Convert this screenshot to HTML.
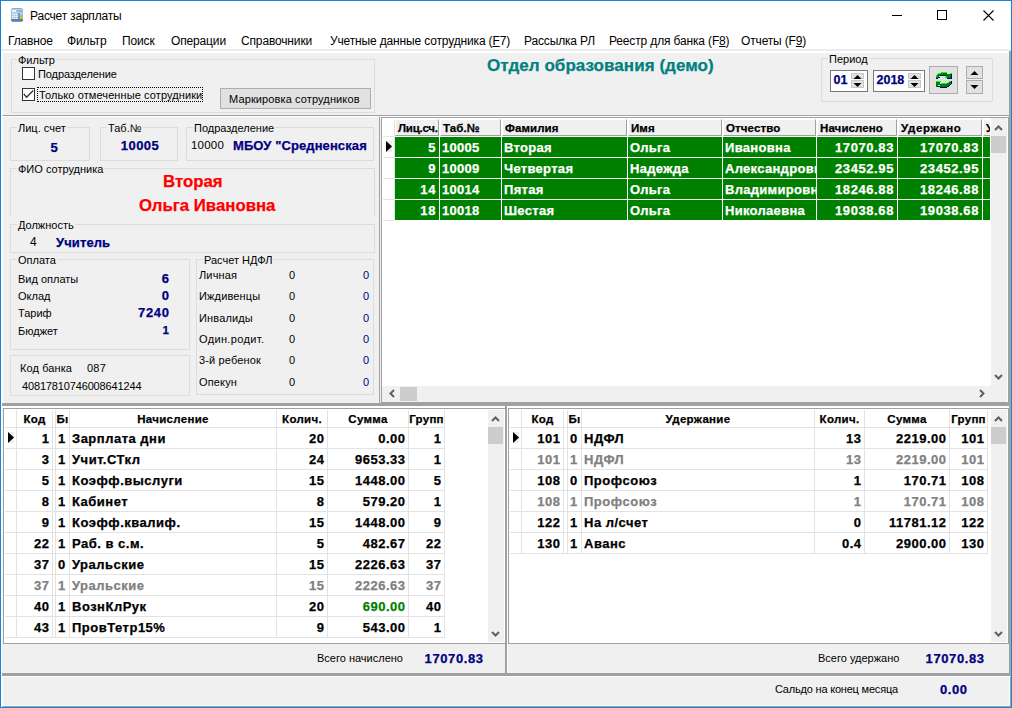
<!DOCTYPE html>
<html><head><meta charset="utf-8"><style>
html,body{margin:0;padding:0;}
body{width:1012px;height:708px;position:relative;overflow:hidden;background:#f0f0f0;font-family:"Liberation Sans",sans-serif;}
.a{position:absolute;box-sizing:content-box;}
.t{white-space:nowrap;}
u{text-decoration:underline;text-underline-offset:1px;}
.t[style*="font-weight:700"]{-webkit-text-stroke:0.25px currentColor;}
</style></head><body>
<div class="a" style="left:0px;top:0px;width:1012px;height:708px;background:#1883d7;"></div>
<div class="a" style="left:1px;top:1px;width:1010px;height:706px;background:#fff;"></div>
<svg class="a" style="left:11px;top:8px" width="13" height="14" viewBox="0 0 13 14" shape-rendering="crispEdges">
<rect x="0" y="1" width="12" height="12" fill="#b3d1ea"/>
<rect x="1" y="0" width="10" height="1" fill="#8da8bf"/>
<rect x="0" y="1" width="1" height="11" fill="#9dbdd8"/><rect x="11" y="1" width="1" height="11" fill="#9dbdd8"/>
<rect x="1" y="2" width="4" height="2" fill="#e6f2fb"/>
<rect x="6" y="2" width="5" height="2" fill="#8fb3dc"/>
<rect x="1" y="6" width="1" height="1" fill="#fff"/><rect x="3" y="6" width="1" height="1" fill="#fff"/><rect x="5" y="6" width="1" height="1" fill="#fff"/>
<rect x="1" y="8" width="1" height="1" fill="#fff"/><rect x="3" y="8" width="1" height="1" fill="#fff"/><rect x="5" y="8" width="1" height="1" fill="#fff"/>
<rect x="1" y="10" width="1" height="1" fill="#f4f4f4"/><rect x="3" y="10" width="1" height="1" fill="#f4f4f4"/><rect x="5" y="10" width="1" height="1" fill="#f4f4f4"/>
<rect x="7" y="5" width="2" height="6" fill="#6a9cd6"/>
<rect x="9" y="7" width="2" height="4" fill="#f2b20c"/>
<rect x="0" y="11" width="12" height="2" fill="#5d84a8"/>
<rect x="1" y="13" width="10" height="1" fill="#7f98ae"/>
</svg>
<div class="a t" style="top:7.84px;font-size:12px;line-height:16px;font-weight:400;color:#000;letter-spacing:-0.2px;left:30px;">Расчет зарплаты</div>
<div class="a" style="left:892px;top:15px;width:10px;height:1px;background:#000;"></div>
<div class="a" style="left:937px;top:10px;width:8px;height:8px;border:1px solid #000;"></div>
<svg class="a" style="left:983px;top:10px" width="11" height="11" viewBox="0 0 11 11"><path d="M0.5 0.5L10.5 10.5M10.5 0.5L0.5 10.5" stroke="#000" stroke-width="1.1"/></svg>
<div class="a t" style="top:32.84px;font-size:12px;line-height:16px;font-weight:400;color:#000;letter-spacing:-0.15px;left:8px;">Главное</div>
<div class="a t" style="top:32.84px;font-size:12px;line-height:16px;font-weight:400;color:#000;letter-spacing:-0.15px;left:67px;">Фильтр</div>
<div class="a t" style="top:32.84px;font-size:12px;line-height:16px;font-weight:400;color:#000;letter-spacing:-0.15px;left:122px;">Поиск</div>
<div class="a t" style="top:32.84px;font-size:12px;line-height:16px;font-weight:400;color:#000;letter-spacing:-0.15px;left:171px;">Операции</div>
<div class="a t" style="top:32.84px;font-size:12px;line-height:16px;font-weight:400;color:#000;letter-spacing:-0.15px;left:241px;">Справочники</div>
<div class="a t" style="top:32.84px;font-size:12px;line-height:16px;font-weight:400;color:#000;letter-spacing:-0.15px;left:330px;">Учетные данные сотрудника (<u>F</u>7)</div>
<div class="a t" style="top:32.84px;font-size:12px;line-height:16px;font-weight:400;color:#000;letter-spacing:-0.15px;left:524px;">Рассылка РЛ</div>
<div class="a t" style="top:32.84px;font-size:12px;line-height:16px;font-weight:400;color:#000;letter-spacing:-0.15px;left:609px;">Реестр для банка (F<u>8</u>)</div>
<div class="a t" style="top:32.84px;font-size:12px;line-height:16px;font-weight:400;color:#000;letter-spacing:-0.15px;left:741px;">Отчеты (F<u>9</u>)</div>
<div class="a" style="left:1px;top:49px;width:1010px;height:2px;background:#ececec;"></div>
<div class="a" style="left:1px;top:51px;width:1010px;height:656px;background:#f0f0f0;"></div>
<div class="a" style="left:1px;top:51px;width:1010px;height:1px;background:#fff;"></div>
<div class="a" style="left:2px;top:52px;width:1006px;height:62px;border-style:solid;border-width:1px;border-color:#fff #a0a0a0 #a0a0a0 #fff;"></div>
<div class="a" style="left:11px;top:59px;width:362px;height:52px;border:1px solid #dcdcdc;"></div>
<div class="a t" style="top:53.19px;font-size:11px;line-height:14px;font-weight:400;color:#000;left:17px;background:linear-gradient(transparent 28%, #f0f0f0 28%, #f0f0f0 62%, transparent 62%);padding:0 1px;">Фильтр</div>
<div class="a" style="left:22px;top:67px;width:11px;height:11px;border:1px solid #333;background:#fff;"></div>
<div class="a t" style="top:67.19px;font-size:11px;line-height:14px;font-weight:400;color:#000;letter-spacing:-0.1px;left:38px;">Подразделение</div>
<div class="a" style="left:22px;top:88px;width:11px;height:11px;border:1px solid #333;background:#fff;"></div>
<svg class="a" style="left:23px;top:89px" width="11" height="11" viewBox="0 0 11 11"><path d="M0.8 5L3.6 8.2L10.2 1.5" stroke="#333" stroke-width="1.3" fill="none"/></svg>
<div class="a" style="left:37px;top:87px;width:164px;height:13px;border:1px solid #000;border-style:dotted;"></div>
<div class="a t" style="top:87.69px;font-size:11px;line-height:14px;font-weight:400;color:#000;letter-spacing:0.1px;left:39px;">Только отмеченные сотрудники</div>
<div class="a" style="left:220px;top:88px;width:149px;height:19px;border:1px solid #adadad;background:#e1e1e1;"></div>
<div class="a t" style="top:92.19px;font-size:11px;line-height:14px;font-weight:400;color:#000;letter-spacing:0.12px;left:229px;">Маркировка сотрудников</div>
<div class="a t" style="top:54.51px;font-size:17px;line-height:22px;font-weight:700;color:#008080;letter-spacing:0.05px;left:487px;">Отдел образования (демо)</div>
<div class="a" style="left:821px;top:58px;width:170px;height:42px;border:1px solid #dcdcdc;"></div>
<div class="a t" style="top:52.19px;font-size:11px;line-height:14px;font-weight:400;color:#000;left:828px;background:linear-gradient(transparent 28%, #f0f0f0 28%, #f0f0f0 62%, transparent 62%);padding:0 1px;">Период</div>
<div class="a" style="left:830px;top:70px;width:36px;height:20px;border:1px solid #7a7a7a;background:#fff;"></div>
<div class="a t" style="top:71.87px;font-size:12.5px;line-height:16px;font-weight:700;color:#000080;left:833.5px;">01</div>
<div class="a" style="left:851px;top:73px;width:11px;height:4px;border:1px solid #c8c8c8;background:#e1e1e1;"></div>
<div class="a" style="left:851px;top:80px;width:11px;height:6px;border:1px solid #c8c8c8;background:#e1e1e1;"></div>
<svg class="a" style="left:851px;top:73px" width="13" height="16" viewBox="0 0 13 16"><path d="M2.5 6L6.5 2L10.5 6Z M2.5 10L10.5 10L6.5 14Z" fill="#000"/></svg>
<div class="a" style="left:873px;top:70px;width:50px;height:20px;border:1px solid #7a7a7a;background:#fff;"></div>
<div class="a t" style="top:71.87px;font-size:12.5px;line-height:16px;font-weight:700;color:#000080;left:876.5px;">2018</div>
<div class="a" style="left:908px;top:73px;width:11px;height:4px;border:1px solid #c8c8c8;background:#e1e1e1;"></div>
<div class="a" style="left:908px;top:80px;width:11px;height:6px;border:1px solid #c8c8c8;background:#e1e1e1;"></div>
<svg class="a" style="left:908px;top:73px" width="13" height="16" viewBox="0 0 13 16"><path d="M2.5 6L6.5 2L10.5 6Z M2.5 10L10.5 10L6.5 14Z" fill="#000"/></svg>
<div class="a" style="left:929px;top:66px;width:27px;height:26px;border:1px solid #adadad;background:#e1e1e1;"></div>
<svg class="a" style="left:936px;top:71px" width="17" height="17" viewBox="0 0 17 17" shape-rendering="crispEdges"><rect x="5" y="1" width="6" height="1" fill="#008000"/><rect x="2" y="2" width="9" height="1" fill="#008000"/><rect x="1" y="3" width="10" height="1" fill="#008000"/><rect x="0" y="4" width="4" height="1" fill="#008000"/><rect x="0" y="5" width="3" height="1" fill="#008000"/><rect x="0" y="6" width="2" height="1" fill="#008000"/><rect x="15" y="2" width="1" height="1" fill="#008000"/><rect x="11" y="3" width="4" height="1" fill="#008000"/><rect x="10" y="4" width="5" height="1" fill="#008000"/><rect x="10" y="5" width="5" height="1" fill="#008000"/><rect x="9" y="6" width="6" height="1" fill="#008000"/><rect x="5" y="1" width="6" height="1" fill="#00ff00"/><rect x="2" y="2" width="3" height="1" fill="#00ff00"/><rect x="1" y="3" width="1" height="1" fill="#00ff00"/><rect x="0" y="4" width="1" height="1" fill="#00ff00"/><rect x="0" y="5" width="1" height="1" fill="#00ff00"/><rect x="14" y="2" width="2" height="1" fill="#00ff00"/><rect x="9" y="6" width="2" height="1" fill="#00ff00"/><rect x="4" y="4" width="6" height="1" fill="#000080"/><rect x="3" y="6" width="1" height="1" fill="#000080"/><rect x="2" y="6" width="1" height="1" fill="#000080"/><rect x="0" y="7" width="2" height="1" fill="#000080"/><rect x="11" y="7" width="5" height="1" fill="#000080"/><rect x="15" y="3" width="1" height="1" fill="#000080"/><rect x="15" y="4" width="1" height="1" fill="#000080"/><rect x="15" y="5" width="1" height="1" fill="#000080"/><rect x="15" y="6" width="1" height="1" fill="#000080"/><rect x="0" y="10" width="5" height="1" fill="#008000"/><rect x="0" y="11" width="4" height="1" fill="#008000"/><rect x="0" y="12" width="4" height="1" fill="#008000"/><rect x="0" y="13" width="5" height="1" fill="#008000"/><rect x="0" y="14" width="2" height="1" fill="#008000"/><rect x="0" y="15" width="1" height="1" fill="#008000"/><rect x="13" y="10" width="2" height="1" fill="#008000"/><rect x="12" y="11" width="3" height="1" fill="#008000"/><rect x="5" y="12" width="10" height="1" fill="#008000"/><rect x="4" y="13" width="10" height="1" fill="#008000"/><rect x="4" y="14" width="9" height="1" fill="#008000"/><rect x="4" y="15" width="7" height="1" fill="#008000"/><rect x="0" y="10" width="5" height="1" fill="#00ff00"/><rect x="5" y="12" width="6" height="1" fill="#00ff00"/><rect x="12" y="11" width="1" height="1" fill="#00ff00"/><rect x="13" y="10" width="2" height="1" fill="#00ff00"/><rect x="15" y="10" width="1" height="1" fill="#000080"/><rect x="15" y="11" width="1" height="1" fill="#000080"/><rect x="15" y="12" width="1" height="1" fill="#000080"/><rect x="14" y="13" width="1" height="1" fill="#000080"/><rect x="13" y="14" width="1" height="1" fill="#000080"/><rect x="11" y="15" width="2" height="1" fill="#000080"/><rect x="4" y="16" width="7" height="1" fill="#000080"/><rect x="2" y="15" width="2" height="1" fill="#000080"/><rect x="1" y="15" width="1" height="1" fill="#000080"/></svg>
<div class="a" style="left:966px;top:66px;width:15px;height:11px;border:1px solid #adadad;background:#e1e1e1;"></div>
<div class="a" style="left:966px;top:80px;width:15px;height:12px;border:1px solid #adadad;background:#e1e1e1;"></div>
<svg class="a" style="left:966px;top:66px" width="17" height="28" viewBox="0 0 17 28"><path d="M4.5 9L8.5 5L12.5 9Z M4.5 19L12.5 19L8.5 23Z" fill="#000"/></svg>
<div class="a" style="left:2px;top:116px;width:376px;height:286px;border-style:solid;border-width:1px;border-color:#fff #a0a0a0 #a0a0a0 #fff;"></div>
<div class="a" style="left:10px;top:127px;width:78px;height:32px;border:1px solid #dcdcdc;"></div>
<div class="a t" style="top:121.19px;font-size:11px;line-height:14px;font-weight:400;color:#000;left:17px;background:linear-gradient(transparent 28%, #f0f0f0 28%, #f0f0f0 62%, transparent 62%);padding:0 1px;">Лиц. счет</div>
<div class="a t" style="top:138.60px;font-size:13px;line-height:17px;font-weight:700;color:#000080;left:-246px;width:600px;text-align:center;">5</div>
<div class="a" style="left:100px;top:127px;width:76px;height:32px;border:1px solid #dcdcdc;"></div>
<div class="a t" style="top:121.19px;font-size:11px;line-height:14px;font-weight:400;color:#000;left:107px;background:linear-gradient(transparent 28%, #f0f0f0 28%, #f0f0f0 62%, transparent 62%);padding:0 1px;">Таб.№</div>
<div class="a t" style="top:137.00px;font-size:13px;line-height:17px;font-weight:700;color:#000080;letter-spacing:0.5px;left:-160px;width:600px;text-align:center;">10005</div>
<div class="a" style="left:186px;top:127px;width:186px;height:32px;border:1px solid #dcdcdc;"></div>
<div class="a t" style="top:121.19px;font-size:11px;line-height:14px;font-weight:400;color:#000;left:193px;background:linear-gradient(transparent 28%, #f0f0f0 28%, #f0f0f0 62%, transparent 62%);padding:0 1px;">Подразделение</div>
<div class="a t" style="top:138.22px;font-size:11.5px;line-height:15px;font-weight:400;color:#000;letter-spacing:0.2px;left:191px;">10000</div>
<div class="a t" style="top:136.70px;font-size:13px;line-height:17px;font-weight:700;color:#000080;letter-spacing:0.1px;left:233px;">МБОУ "Средненская</div>
<div class="a" style="left:10px;top:168px;width:363px;height:48px;border:1px solid #dcdcdc;"></div>
<div class="a t" style="top:162.19px;font-size:11px;line-height:14px;font-weight:400;color:#000;left:17px;background:linear-gradient(transparent 28%, #f0f0f0 28%, #f0f0f0 62%, transparent 62%);padding:0 1px;">ФИО сотрудника</div>
<div class="a" style="left:10px;top:216px;width:365px;height:3px;background:#f0f0f0;"></div>
<div class="a t" style="top:171.08px;font-size:16.8px;line-height:22px;font-weight:700;color:#ff0000;left:163px;">Вторая</div>
<div class="a t" style="top:195.38px;font-size:16.8px;line-height:22px;font-weight:700;color:#ff0000;left:139px;">Ольга Ивановна</div>
<div class="a" style="left:10px;top:224px;width:363px;height:27px;border:1px solid #dcdcdc;"></div>
<div class="a t" style="top:218.19px;font-size:11px;line-height:14px;font-weight:400;color:#000;left:17px;background:linear-gradient(transparent 28%, #f0f0f0 28%, #f0f0f0 62%, transparent 62%);padding:0 1px;">Должность</div>
<div class="a t" style="top:234.34px;font-size:12px;line-height:16px;font-weight:400;color:#000;left:30px;">4</div>
<div class="a t" style="top:233.50px;font-size:13px;line-height:17px;font-weight:700;color:#000080;letter-spacing:0.1px;left:56px;">Учитель</div>
<div class="a" style="left:10px;top:259px;width:178px;height:89px;border:1px solid #dcdcdc;"></div>
<div class="a t" style="top:253.19px;font-size:11px;line-height:14px;font-weight:400;color:#000;left:17px;background:linear-gradient(transparent 28%, #f0f0f0 28%, #f0f0f0 62%, transparent 62%);padding:0 1px;">Оплата</div>
<div class="a t" style="top:272.19px;font-size:11px;line-height:14px;font-weight:400;color:#000;left:18px;">Вид оплаты</div>
<div class="a t" style="top:270.00px;font-size:13px;line-height:17px;font-weight:700;color:#000080;letter-spacing:0.7px;left:-231px;width:400.7px;text-align:right;">6</div>
<div class="a t" style="top:289.19px;font-size:11px;line-height:14px;font-weight:400;color:#000;left:18px;">Оклад</div>
<div class="a t" style="top:287.00px;font-size:13px;line-height:17px;font-weight:700;color:#000080;letter-spacing:0.7px;left:-231px;width:400.7px;text-align:right;">0</div>
<div class="a t" style="top:306.19px;font-size:11px;line-height:14px;font-weight:400;color:#000;left:18px;">Тариф</div>
<div class="a t" style="top:304.00px;font-size:13px;line-height:17px;font-weight:700;color:#000080;letter-spacing:0.7px;left:-231px;width:400.7px;text-align:right;">7240</div>
<div class="a t" style="top:323.59px;font-size:11px;line-height:14px;font-weight:400;color:#000;left:18px;">Бюджет</div>
<div class="a t" style="top:322.92px;font-size:11.5px;line-height:15px;font-weight:700;color:#000080;letter-spacing:0.7px;left:-231px;width:400.7px;text-align:right;">1</div>
<div class="a" style="left:10px;top:355px;width:178px;height:39px;border:1px solid #dcdcdc;"></div>
<div class="a t" style="top:361.19px;font-size:11px;line-height:14px;font-weight:400;color:#000;letter-spacing:0.1px;left:20px;">Код банка</div>
<div class="a t" style="top:361.19px;font-size:11px;line-height:14px;font-weight:400;color:#000;letter-spacing:0.2px;left:87px;">087</div>
<div class="a t" style="top:379.49px;font-size:11px;line-height:14px;font-weight:400;color:#000;letter-spacing:-0.15px;left:22px;">40817810746008641244</div>
<div class="a" style="left:196px;top:259px;width:176px;height:134px;border:1px solid #dcdcdc;"></div>
<div class="a t" style="top:253.19px;font-size:11px;line-height:14px;font-weight:400;color:#000;left:203px;background:linear-gradient(transparent 28%, #f0f0f0 28%, #f0f0f0 62%, transparent 62%);padding:0 1px;">Расчет НДФЛ</div>
<div class="a t" style="top:267.89px;font-size:11px;line-height:14px;font-weight:400;color:#000;letter-spacing:0.15px;left:199px;">Личная</div>
<div class="a t" style="top:267.89px;font-size:11px;line-height:14px;font-weight:400;color:#000;left:289px;">0</div>
<div class="a t" style="top:267.89px;font-size:11px;line-height:14px;font-weight:400;color:#000080;left:-31px;width:400px;text-align:right;">0</div>
<div class="a t" style="top:289.29px;font-size:11px;line-height:14px;font-weight:400;color:#000;letter-spacing:0.15px;left:199px;">Иждивенцы</div>
<div class="a t" style="top:289.29px;font-size:11px;line-height:14px;font-weight:400;color:#000;left:289px;">0</div>
<div class="a t" style="top:289.29px;font-size:11px;line-height:14px;font-weight:400;color:#000080;left:-31px;width:400px;text-align:right;">0</div>
<div class="a t" style="top:310.69px;font-size:11px;line-height:14px;font-weight:400;color:#000;letter-spacing:0.15px;left:199px;">Инвалиды</div>
<div class="a t" style="top:310.69px;font-size:11px;line-height:14px;font-weight:400;color:#000;left:289px;">0</div>
<div class="a t" style="top:310.69px;font-size:11px;line-height:14px;font-weight:400;color:#000080;left:-31px;width:400px;text-align:right;">0</div>
<div class="a t" style="top:332.09px;font-size:11px;line-height:14px;font-weight:400;color:#000;letter-spacing:0.35px;left:199px;">Один.родит.</div>
<div class="a t" style="top:332.09px;font-size:11px;line-height:14px;font-weight:400;color:#000;left:289px;">0</div>
<div class="a t" style="top:332.09px;font-size:11px;line-height:14px;font-weight:400;color:#000080;left:-31px;width:400px;text-align:right;">0</div>
<div class="a t" style="top:353.49px;font-size:11px;line-height:14px;font-weight:400;color:#000;letter-spacing:0.15px;left:199px;">3-й ребенок</div>
<div class="a t" style="top:353.49px;font-size:11px;line-height:14px;font-weight:400;color:#000;left:289px;">0</div>
<div class="a t" style="top:353.49px;font-size:11px;line-height:14px;font-weight:400;color:#000080;left:-31px;width:400px;text-align:right;">0</div>
<div class="a t" style="top:374.89px;font-size:11px;line-height:14px;font-weight:400;color:#000;letter-spacing:0.15px;left:199px;">Опекун</div>
<div class="a t" style="top:374.89px;font-size:11px;line-height:14px;font-weight:400;color:#000;left:289px;">0</div>
<div class="a t" style="top:374.89px;font-size:11px;line-height:14px;font-weight:400;color:#000080;left:-31px;width:400px;text-align:right;">0</div>
<div class="a" style="left:380px;top:116px;width:1px;height:287px;background:#f0f0f0;"></div>
<div class="a" style="left:380px;top:116px;width:630px;height:1px;background:#fff;"></div>
<div class="a" style="left:381px;top:117px;width:626px;height:284px;border:1px solid #a0a0a0;background:#fff;"></div>
<div class="a" style="left:383px;top:136px;width:11px;height:1px;background:#e3e3e3;"></div>
<div class="a" style="left:383px;top:157px;width:11px;height:1px;background:#e3e3e3;"></div>
<div class="a" style="left:383px;top:178px;width:11px;height:1px;background:#e3e3e3;"></div>
<div class="a" style="left:383px;top:199px;width:11px;height:1px;background:#e3e3e3;"></div>
<div class="a" style="left:383px;top:220px;width:11px;height:1px;background:#e3e3e3;"></div>
<div class="a" style="left:394px;top:119px;width:1px;height:101px;background:#e3e3e3;"></div>
<div class="a" style="left:395px;top:119px;width:43px;height:16px;background:#f0f0f0;border-style:solid;border-width:1px 1px 1px 1px;border-color:#fff #a0a0a0 #a0a0a0 #fff;box-sizing:border-box;width:44px;height:17px"></div>
<div class="a" style="left:395px;top:119px;width:44px;height:17px;overflow:hidden"><div class="t" style="position:absolute;left:3px;top:2.32px;font-size:11.5px;line-height:14px;font-weight:700;letter-spacing:-0.25px;white-space:nowrap">Лиц.сч.</div></div>
<div class="a" style="left:440px;top:119px;width:60px;height:16px;background:#f0f0f0;border-style:solid;border-width:1px 1px 1px 1px;border-color:#fff #a0a0a0 #a0a0a0 #fff;box-sizing:border-box;width:61px;height:17px"></div>
<div class="a" style="left:440px;top:119px;width:61px;height:17px;overflow:hidden"><div class="t" style="position:absolute;left:3px;top:2.32px;font-size:11.5px;line-height:14px;font-weight:700;letter-spacing:0.1px;white-space:nowrap">Таб.№</div></div>
<div class="a" style="left:502px;top:119px;width:124px;height:16px;background:#f0f0f0;border-style:solid;border-width:1px 1px 1px 1px;border-color:#fff #a0a0a0 #a0a0a0 #fff;box-sizing:border-box;width:125px;height:17px"></div>
<div class="a" style="left:502px;top:119px;width:125px;height:17px;overflow:hidden"><div class="t" style="position:absolute;left:3px;top:2.32px;font-size:11.5px;line-height:14px;font-weight:700;letter-spacing:0.1px;white-space:nowrap">Фамилия</div></div>
<div class="a" style="left:628px;top:119px;width:93px;height:16px;background:#f0f0f0;border-style:solid;border-width:1px 1px 1px 1px;border-color:#fff #a0a0a0 #a0a0a0 #fff;box-sizing:border-box;width:94px;height:17px"></div>
<div class="a" style="left:628px;top:119px;width:94px;height:17px;overflow:hidden"><div class="t" style="position:absolute;left:3px;top:2.32px;font-size:11.5px;line-height:14px;font-weight:700;letter-spacing:0.1px;white-space:nowrap">Имя</div></div>
<div class="a" style="left:723px;top:119px;width:92px;height:16px;background:#f0f0f0;border-style:solid;border-width:1px 1px 1px 1px;border-color:#fff #a0a0a0 #a0a0a0 #fff;box-sizing:border-box;width:93px;height:17px"></div>
<div class="a" style="left:723px;top:119px;width:93px;height:17px;overflow:hidden"><div class="t" style="position:absolute;left:3px;top:2.32px;font-size:11.5px;line-height:14px;font-weight:700;letter-spacing:0.1px;white-space:nowrap">Отчество</div></div>
<div class="a" style="left:817px;top:119px;width:79px;height:16px;background:#f0f0f0;border-style:solid;border-width:1px 1px 1px 1px;border-color:#fff #a0a0a0 #a0a0a0 #fff;box-sizing:border-box;width:80px;height:17px"></div>
<div class="a" style="left:817px;top:119px;width:80px;height:17px;overflow:hidden"><div class="t" style="position:absolute;left:3px;top:2.32px;font-size:11.5px;line-height:14px;font-weight:700;letter-spacing:0.1px;white-space:nowrap">Начислено</div></div>
<div class="a" style="left:898px;top:119px;width:83px;height:16px;background:#f0f0f0;border-style:solid;border-width:1px 1px 1px 1px;border-color:#fff #a0a0a0 #a0a0a0 #fff;box-sizing:border-box;width:84px;height:17px"></div>
<div class="a" style="left:898px;top:119px;width:84px;height:17px;overflow:hidden"><div class="t" style="position:absolute;left:3px;top:2.32px;font-size:11.5px;line-height:14px;font-weight:700;letter-spacing:0.6px;white-space:nowrap">Удержано</div></div>
<div class="a" style="left:983px;top:119px;width:6px;height:16px;background:#f0f0f0;border-style:solid;border-width:1px 0px 1px 1px;border-color:#fff #a0a0a0 #a0a0a0 #fff;box-sizing:border-box;width:7px;height:17px"></div>
<div class="a" style="left:983px;top:119px;width:7px;height:17px;overflow:hidden"><div class="t" style="position:absolute;left:3px;top:2.32px;font-size:11.5px;line-height:14px;font-weight:700;letter-spacing:0.1px;white-space:nowrap">У</div></div>
<div class="a" style="left:395px;top:137px;width:595px;height:20px;background:#008000;"></div>
<div class="a" style="left:439px;top:137px;width:1px;height:20px;background:#fff;"></div>
<div class="a" style="left:501px;top:137px;width:1px;height:20px;background:#fff;"></div>
<div class="a" style="left:627px;top:137px;width:1px;height:20px;background:#fff;"></div>
<div class="a" style="left:722px;top:137px;width:1px;height:20px;background:#fff;"></div>
<div class="a" style="left:816px;top:137px;width:1px;height:20px;background:#fff;"></div>
<div class="a" style="left:897px;top:137px;width:1px;height:20px;background:#fff;"></div>
<div class="a" style="left:982px;top:137px;width:1px;height:20px;background:#fff;"></div>
<div class="a" style="left:395px;top:157px;width:595px;height:1px;background:#fff;"></div>
<div class="a" style="left:395px;top:137px;width:44px;height:20px;overflow:hidden"><div class="t" style="position:absolute;right:3px;top:1.50px;font-size:13px;line-height:17px;font-weight:700;color:#fff;letter-spacing:0.6px;white-space:nowrap">5</div></div>
<div class="a" style="left:440px;top:137px;width:61px;height:20px;overflow:hidden"><div class="t" style="position:absolute;left:2px;top:1.50px;font-size:13px;line-height:17px;font-weight:700;color:#fff;letter-spacing:0.3px;white-space:nowrap">10005</div></div>
<div class="a" style="left:502px;top:137px;width:125px;height:20px;overflow:hidden"><div class="t" style="position:absolute;left:2px;top:1.50px;font-size:13px;line-height:17px;font-weight:700;color:#fff;letter-spacing:0.3px;white-space:nowrap">Вторая</div></div>
<div class="a" style="left:628px;top:137px;width:94px;height:20px;overflow:hidden"><div class="t" style="position:absolute;left:2px;top:1.50px;font-size:13px;line-height:17px;font-weight:700;color:#fff;letter-spacing:0.3px;white-space:nowrap">Ольга</div></div>
<div class="a" style="left:723px;top:137px;width:93px;height:20px;overflow:hidden"><div class="t" style="position:absolute;left:2px;top:1.50px;font-size:13px;line-height:17px;font-weight:700;color:#fff;letter-spacing:0.3px;white-space:nowrap">Ивановна</div></div>
<div class="a" style="left:817px;top:137px;width:80px;height:20px;overflow:hidden"><div class="t" style="position:absolute;right:3px;top:1.50px;font-size:13px;line-height:17px;font-weight:700;color:#fff;letter-spacing:0.6px;white-space:nowrap">17070.83</div></div>
<div class="a" style="left:898px;top:137px;width:84px;height:20px;overflow:hidden"><div class="t" style="position:absolute;right:3px;top:1.50px;font-size:13px;line-height:17px;font-weight:700;color:#fff;letter-spacing:0.6px;white-space:nowrap">17070.83</div></div>
<div class="a" style="left:395px;top:158px;width:595px;height:20px;background:#008000;"></div>
<div class="a" style="left:439px;top:158px;width:1px;height:20px;background:#fff;"></div>
<div class="a" style="left:501px;top:158px;width:1px;height:20px;background:#fff;"></div>
<div class="a" style="left:627px;top:158px;width:1px;height:20px;background:#fff;"></div>
<div class="a" style="left:722px;top:158px;width:1px;height:20px;background:#fff;"></div>
<div class="a" style="left:816px;top:158px;width:1px;height:20px;background:#fff;"></div>
<div class="a" style="left:897px;top:158px;width:1px;height:20px;background:#fff;"></div>
<div class="a" style="left:982px;top:158px;width:1px;height:20px;background:#fff;"></div>
<div class="a" style="left:395px;top:178px;width:595px;height:1px;background:#fff;"></div>
<div class="a" style="left:395px;top:158px;width:44px;height:20px;overflow:hidden"><div class="t" style="position:absolute;right:3px;top:1.50px;font-size:13px;line-height:17px;font-weight:700;color:#fff;letter-spacing:0.6px;white-space:nowrap">9</div></div>
<div class="a" style="left:440px;top:158px;width:61px;height:20px;overflow:hidden"><div class="t" style="position:absolute;left:2px;top:1.50px;font-size:13px;line-height:17px;font-weight:700;color:#fff;letter-spacing:0.3px;white-space:nowrap">10009</div></div>
<div class="a" style="left:502px;top:158px;width:125px;height:20px;overflow:hidden"><div class="t" style="position:absolute;left:2px;top:1.50px;font-size:13px;line-height:17px;font-weight:700;color:#fff;letter-spacing:0.3px;white-space:nowrap">Четвертая</div></div>
<div class="a" style="left:628px;top:158px;width:94px;height:20px;overflow:hidden"><div class="t" style="position:absolute;left:2px;top:1.50px;font-size:13px;line-height:17px;font-weight:700;color:#fff;letter-spacing:0.3px;white-space:nowrap">Надежда</div></div>
<div class="a" style="left:723px;top:158px;width:93px;height:20px;overflow:hidden"><div class="t" style="position:absolute;left:2px;top:1.50px;font-size:13px;line-height:17px;font-weight:700;color:#fff;letter-spacing:0.3px;white-space:nowrap">Александровна</div></div>
<div class="a" style="left:817px;top:158px;width:80px;height:20px;overflow:hidden"><div class="t" style="position:absolute;right:3px;top:1.50px;font-size:13px;line-height:17px;font-weight:700;color:#fff;letter-spacing:0.6px;white-space:nowrap">23452.95</div></div>
<div class="a" style="left:898px;top:158px;width:84px;height:20px;overflow:hidden"><div class="t" style="position:absolute;right:3px;top:1.50px;font-size:13px;line-height:17px;font-weight:700;color:#fff;letter-spacing:0.6px;white-space:nowrap">23452.95</div></div>
<div class="a" style="left:395px;top:179px;width:595px;height:20px;background:#008000;"></div>
<div class="a" style="left:439px;top:179px;width:1px;height:20px;background:#fff;"></div>
<div class="a" style="left:501px;top:179px;width:1px;height:20px;background:#fff;"></div>
<div class="a" style="left:627px;top:179px;width:1px;height:20px;background:#fff;"></div>
<div class="a" style="left:722px;top:179px;width:1px;height:20px;background:#fff;"></div>
<div class="a" style="left:816px;top:179px;width:1px;height:20px;background:#fff;"></div>
<div class="a" style="left:897px;top:179px;width:1px;height:20px;background:#fff;"></div>
<div class="a" style="left:982px;top:179px;width:1px;height:20px;background:#fff;"></div>
<div class="a" style="left:395px;top:199px;width:595px;height:1px;background:#fff;"></div>
<div class="a" style="left:395px;top:179px;width:44px;height:20px;overflow:hidden"><div class="t" style="position:absolute;right:3px;top:1.50px;font-size:13px;line-height:17px;font-weight:700;color:#fff;letter-spacing:0.6px;white-space:nowrap">14</div></div>
<div class="a" style="left:440px;top:179px;width:61px;height:20px;overflow:hidden"><div class="t" style="position:absolute;left:2px;top:1.50px;font-size:13px;line-height:17px;font-weight:700;color:#fff;letter-spacing:0.3px;white-space:nowrap">10014</div></div>
<div class="a" style="left:502px;top:179px;width:125px;height:20px;overflow:hidden"><div class="t" style="position:absolute;left:2px;top:1.50px;font-size:13px;line-height:17px;font-weight:700;color:#fff;letter-spacing:0.3px;white-space:nowrap">Пятая</div></div>
<div class="a" style="left:628px;top:179px;width:94px;height:20px;overflow:hidden"><div class="t" style="position:absolute;left:2px;top:1.50px;font-size:13px;line-height:17px;font-weight:700;color:#fff;letter-spacing:0.3px;white-space:nowrap">Ольга</div></div>
<div class="a" style="left:723px;top:179px;width:93px;height:20px;overflow:hidden"><div class="t" style="position:absolute;left:2px;top:1.50px;font-size:13px;line-height:17px;font-weight:700;color:#fff;letter-spacing:0.3px;white-space:nowrap">Владимировна</div></div>
<div class="a" style="left:817px;top:179px;width:80px;height:20px;overflow:hidden"><div class="t" style="position:absolute;right:3px;top:1.50px;font-size:13px;line-height:17px;font-weight:700;color:#fff;letter-spacing:0.6px;white-space:nowrap">18246.88</div></div>
<div class="a" style="left:898px;top:179px;width:84px;height:20px;overflow:hidden"><div class="t" style="position:absolute;right:3px;top:1.50px;font-size:13px;line-height:17px;font-weight:700;color:#fff;letter-spacing:0.6px;white-space:nowrap">18246.88</div></div>
<div class="a" style="left:395px;top:200px;width:595px;height:20px;background:#008000;"></div>
<div class="a" style="left:439px;top:200px;width:1px;height:20px;background:#fff;"></div>
<div class="a" style="left:501px;top:200px;width:1px;height:20px;background:#fff;"></div>
<div class="a" style="left:627px;top:200px;width:1px;height:20px;background:#fff;"></div>
<div class="a" style="left:722px;top:200px;width:1px;height:20px;background:#fff;"></div>
<div class="a" style="left:816px;top:200px;width:1px;height:20px;background:#fff;"></div>
<div class="a" style="left:897px;top:200px;width:1px;height:20px;background:#fff;"></div>
<div class="a" style="left:982px;top:200px;width:1px;height:20px;background:#fff;"></div>
<div class="a" style="left:395px;top:220px;width:595px;height:1px;background:#fff;"></div>
<div class="a" style="left:395px;top:200px;width:44px;height:20px;overflow:hidden"><div class="t" style="position:absolute;right:3px;top:1.50px;font-size:13px;line-height:17px;font-weight:700;color:#fff;letter-spacing:0.6px;white-space:nowrap">18</div></div>
<div class="a" style="left:440px;top:200px;width:61px;height:20px;overflow:hidden"><div class="t" style="position:absolute;left:2px;top:1.50px;font-size:13px;line-height:17px;font-weight:700;color:#fff;letter-spacing:0.3px;white-space:nowrap">10018</div></div>
<div class="a" style="left:502px;top:200px;width:125px;height:20px;overflow:hidden"><div class="t" style="position:absolute;left:2px;top:1.50px;font-size:13px;line-height:17px;font-weight:700;color:#fff;letter-spacing:0.3px;white-space:nowrap">Шестая</div></div>
<div class="a" style="left:628px;top:200px;width:94px;height:20px;overflow:hidden"><div class="t" style="position:absolute;left:2px;top:1.50px;font-size:13px;line-height:17px;font-weight:700;color:#fff;letter-spacing:0.3px;white-space:nowrap">Ольга</div></div>
<div class="a" style="left:723px;top:200px;width:93px;height:20px;overflow:hidden"><div class="t" style="position:absolute;left:2px;top:1.50px;font-size:13px;line-height:17px;font-weight:700;color:#fff;letter-spacing:0.3px;white-space:nowrap">Николаевна</div></div>
<div class="a" style="left:817px;top:200px;width:80px;height:20px;overflow:hidden"><div class="t" style="position:absolute;right:3px;top:1.50px;font-size:13px;line-height:17px;font-weight:700;color:#fff;letter-spacing:0.6px;white-space:nowrap">19038.68</div></div>
<div class="a" style="left:898px;top:200px;width:84px;height:20px;overflow:hidden"><div class="t" style="position:absolute;right:3px;top:1.50px;font-size:13px;line-height:17px;font-weight:700;color:#fff;letter-spacing:0.6px;white-space:nowrap">19038.68</div></div>
<div class="a" style="left:386px;top:141px;width:6px;height:11px;background:#ececec;"></div>
<svg class="a" style="left:386px;top:141px" width="7" height="11" viewBox="0 0 7 11"><path d="M0 0L6 5.5L0 11Z" fill="#000"/></svg>
<div class="a" style="left:991px;top:118px;width:16px;height:268px;background:#f0f0f0;"></div>
<div class="a" style="left:991px;top:136px;width:15px;height:17px;background:#cdcdcd;"></div>
<svg class="a" style="left:994px;top:124px" width="9" height="9" viewBox="0 0 9 9"><path d="M1 6L4.5 2.5L8 6" stroke="#606060" stroke-width="2" fill="none"/></svg>
<svg class="a" style="left:994px;top:372px" width="9" height="9" viewBox="0 0 9 9"><path d="M1 3L4.5 6.5L8 3" stroke="#606060" stroke-width="2" fill="none"/></svg>
<div class="a" style="left:382px;top:386px;width:609px;height:16px;background:#f0f0f0;"></div>
<div class="a" style="left:400px;top:387px;width:17px;height:14px;background:#cdcdcd;"></div>
<svg class="a" style="left:388px;top:389px" width="9" height="9" viewBox="0 0 9 9"><path d="M6 1L2.5 4.5L6 8" stroke="#606060" stroke-width="2" fill="none"/></svg>
<svg class="a" style="left:977px;top:389px" width="9" height="9" viewBox="0 0 9 9"><path d="M3 1L6.5 4.5L3 8" stroke="#606060" stroke-width="2" fill="none"/></svg>
<div class="a" style="left:991px;top:386px;width:16px;height:16px;background:#f0f0f0;"></div>
<div class="a" style="left:2px;top:403px;width:1008px;height:3px;background:#a0a0a0;"></div>
<div class="a" style="left:2px;top:406px;width:1008px;height:2px;background:#fff;"></div>
<div class="a" style="left:3px;top:408px;width:501px;height:234px;border:1px solid #a0a0a0;background:#fff;"></div>
<div class="a" style="left:16px;top:410px;width:1px;height:228px;background:#e3e3e3;"></div>
<div class="a" style="left:52px;top:410px;width:1px;height:228px;background:#e3e3e3;"></div>
<div class="a" style="left:55px;top:410px;width:1px;height:228px;background:#e3e3e3;"></div>
<div class="a" style="left:69px;top:410px;width:1px;height:228px;background:#e3e3e3;"></div>
<div class="a" style="left:276px;top:410px;width:1px;height:228px;background:#e3e3e3;"></div>
<div class="a" style="left:327px;top:410px;width:1px;height:228px;background:#e3e3e3;"></div>
<div class="a" style="left:408px;top:410px;width:1px;height:228px;background:#e3e3e3;"></div>
<div class="a" style="left:444px;top:410px;width:1px;height:228px;background:#e3e3e3;"></div>
<div class="a" style="left:5px;top:427px;width:440px;height:1px;background:#e3e3e3;"></div>
<div class="a" style="left:5px;top:448px;width:440px;height:1px;background:#e3e3e3;"></div>
<div class="a" style="left:5px;top:469px;width:440px;height:1px;background:#e3e3e3;"></div>
<div class="a" style="left:5px;top:490px;width:440px;height:1px;background:#e3e3e3;"></div>
<div class="a" style="left:5px;top:511px;width:440px;height:1px;background:#e3e3e3;"></div>
<div class="a" style="left:5px;top:532px;width:440px;height:1px;background:#e3e3e3;"></div>
<div class="a" style="left:5px;top:553px;width:440px;height:1px;background:#e3e3e3;"></div>
<div class="a" style="left:5px;top:574px;width:440px;height:1px;background:#e3e3e3;"></div>
<div class="a" style="left:5px;top:595px;width:440px;height:1px;background:#e3e3e3;"></div>
<div class="a" style="left:5px;top:616px;width:440px;height:1px;background:#e3e3e3;"></div>
<div class="a" style="left:5px;top:637px;width:440px;height:1px;background:#e3e3e3;"></div>
<div class="a" style="left:17px;top:409px;width:35px;height:20px;overflow:hidden"><div class="t" style="position:absolute;left:0;width:100%;text-align:center;top:2.12px;font-size:11.5px;line-height:17px;font-weight:700;color:#000;letter-spacing:0.3px;white-space:nowrap;">Код</div></div>
<div class="a" style="left:56px;top:409px;width:13px;height:20px;overflow:hidden"><div class="t" style="position:absolute;left:0;width:100%;text-align:center;top:2.12px;font-size:11.5px;line-height:17px;font-weight:700;color:#000;letter-spacing:0.3px;white-space:nowrap;">Бı</div></div>
<div class="a" style="left:70px;top:409px;width:206px;height:20px;overflow:hidden"><div class="t" style="position:absolute;left:0;width:100%;text-align:center;top:2.12px;font-size:11.5px;line-height:17px;font-weight:700;color:#000;letter-spacing:0.3px;white-space:nowrap;">Начисление</div></div>
<div class="a" style="left:277px;top:409px;width:50px;height:20px;overflow:hidden"><div class="t" style="position:absolute;left:0;width:100%;text-align:center;top:2.12px;font-size:11.5px;line-height:17px;font-weight:700;color:#000;letter-spacing:0.3px;white-space:nowrap;">Колич.</div></div>
<div class="a" style="left:328px;top:409px;width:80px;height:20px;overflow:hidden"><div class="t" style="position:absolute;left:0;width:100%;text-align:center;top:2.12px;font-size:11.5px;line-height:17px;font-weight:700;color:#000;letter-spacing:0.3px;white-space:nowrap;">Сумма</div></div>
<div class="a" style="left:409px;top:409px;width:35px;height:20px;overflow:hidden"><div class="t" style="position:absolute;left:0;width:100%;text-align:center;top:2.12px;font-size:11.5px;line-height:17px;font-weight:700;color:#000;letter-spacing:0.3px;white-space:nowrap;">Групп</div></div>
<div class="a" style="left:17px;top:428px;width:35px;height:20px;overflow:hidden"><div class="t" style="position:absolute;right:3px;top:1.50px;font-size:13px;line-height:17px;font-weight:700;color:#000;letter-spacing:0.5px;white-space:nowrap;margin-right:-0.5px;">1</div></div>
<div class="a" style="left:56px;top:428px;width:13px;height:20px;overflow:hidden"><div class="t" style="position:absolute;left:2px;top:1.50px;font-size:13px;line-height:17px;font-weight:700;color:#000;letter-spacing:0.5px;white-space:nowrap;">1</div></div>
<div class="a" style="left:70px;top:428px;width:206px;height:20px;overflow:hidden"><div class="t" style="position:absolute;left:2px;top:1.50px;font-size:13px;line-height:17px;font-weight:700;color:#000;letter-spacing:0.5px;white-space:nowrap;">Зарплата дни</div></div>
<div class="a" style="left:277px;top:428px;width:50px;height:20px;overflow:hidden"><div class="t" style="position:absolute;right:3px;top:1.50px;font-size:13px;line-height:17px;font-weight:700;color:#000;letter-spacing:0.5px;white-space:nowrap;margin-right:-0.5px;">20</div></div>
<div class="a" style="left:328px;top:428px;width:80px;height:20px;overflow:hidden"><div class="t" style="position:absolute;right:3px;top:1.50px;font-size:13px;line-height:17px;font-weight:700;color:#000;letter-spacing:0.5px;white-space:nowrap;margin-right:-0.5px;">0.00</div></div>
<div class="a" style="left:409px;top:428px;width:35px;height:20px;overflow:hidden"><div class="t" style="position:absolute;right:3px;top:1.50px;font-size:13px;line-height:17px;font-weight:700;color:#000;letter-spacing:0.5px;white-space:nowrap;margin-right:-0.5px;">1</div></div>
<div class="a" style="left:17px;top:449px;width:35px;height:20px;overflow:hidden"><div class="t" style="position:absolute;right:3px;top:1.50px;font-size:13px;line-height:17px;font-weight:700;color:#000;letter-spacing:0.5px;white-space:nowrap;margin-right:-0.5px;">3</div></div>
<div class="a" style="left:56px;top:449px;width:13px;height:20px;overflow:hidden"><div class="t" style="position:absolute;left:2px;top:1.50px;font-size:13px;line-height:17px;font-weight:700;color:#000;letter-spacing:0.5px;white-space:nowrap;">1</div></div>
<div class="a" style="left:70px;top:449px;width:206px;height:20px;overflow:hidden"><div class="t" style="position:absolute;left:2px;top:1.50px;font-size:13px;line-height:17px;font-weight:700;color:#000;letter-spacing:0.5px;white-space:nowrap;">Учит.СТкл</div></div>
<div class="a" style="left:277px;top:449px;width:50px;height:20px;overflow:hidden"><div class="t" style="position:absolute;right:3px;top:1.50px;font-size:13px;line-height:17px;font-weight:700;color:#000;letter-spacing:0.5px;white-space:nowrap;margin-right:-0.5px;">24</div></div>
<div class="a" style="left:328px;top:449px;width:80px;height:20px;overflow:hidden"><div class="t" style="position:absolute;right:3px;top:1.50px;font-size:13px;line-height:17px;font-weight:700;color:#000;letter-spacing:0.5px;white-space:nowrap;margin-right:-0.5px;">9653.33</div></div>
<div class="a" style="left:409px;top:449px;width:35px;height:20px;overflow:hidden"><div class="t" style="position:absolute;right:3px;top:1.50px;font-size:13px;line-height:17px;font-weight:700;color:#000;letter-spacing:0.5px;white-space:nowrap;margin-right:-0.5px;">1</div></div>
<div class="a" style="left:17px;top:470px;width:35px;height:20px;overflow:hidden"><div class="t" style="position:absolute;right:3px;top:1.50px;font-size:13px;line-height:17px;font-weight:700;color:#000;letter-spacing:0.5px;white-space:nowrap;margin-right:-0.5px;">5</div></div>
<div class="a" style="left:56px;top:470px;width:13px;height:20px;overflow:hidden"><div class="t" style="position:absolute;left:2px;top:1.50px;font-size:13px;line-height:17px;font-weight:700;color:#000;letter-spacing:0.5px;white-space:nowrap;">1</div></div>
<div class="a" style="left:70px;top:470px;width:206px;height:20px;overflow:hidden"><div class="t" style="position:absolute;left:2px;top:1.50px;font-size:13px;line-height:17px;font-weight:700;color:#000;letter-spacing:0.5px;white-space:nowrap;">Коэфф.выслуги</div></div>
<div class="a" style="left:277px;top:470px;width:50px;height:20px;overflow:hidden"><div class="t" style="position:absolute;right:3px;top:1.50px;font-size:13px;line-height:17px;font-weight:700;color:#000;letter-spacing:0.5px;white-space:nowrap;margin-right:-0.5px;">15</div></div>
<div class="a" style="left:328px;top:470px;width:80px;height:20px;overflow:hidden"><div class="t" style="position:absolute;right:3px;top:1.50px;font-size:13px;line-height:17px;font-weight:700;color:#000;letter-spacing:0.5px;white-space:nowrap;margin-right:-0.5px;">1448.00</div></div>
<div class="a" style="left:409px;top:470px;width:35px;height:20px;overflow:hidden"><div class="t" style="position:absolute;right:3px;top:1.50px;font-size:13px;line-height:17px;font-weight:700;color:#000;letter-spacing:0.5px;white-space:nowrap;margin-right:-0.5px;">5</div></div>
<div class="a" style="left:17px;top:491px;width:35px;height:20px;overflow:hidden"><div class="t" style="position:absolute;right:3px;top:1.50px;font-size:13px;line-height:17px;font-weight:700;color:#000;letter-spacing:0.5px;white-space:nowrap;margin-right:-0.5px;">8</div></div>
<div class="a" style="left:56px;top:491px;width:13px;height:20px;overflow:hidden"><div class="t" style="position:absolute;left:2px;top:1.50px;font-size:13px;line-height:17px;font-weight:700;color:#000;letter-spacing:0.5px;white-space:nowrap;">1</div></div>
<div class="a" style="left:70px;top:491px;width:206px;height:20px;overflow:hidden"><div class="t" style="position:absolute;left:2px;top:1.50px;font-size:13px;line-height:17px;font-weight:700;color:#000;letter-spacing:0.5px;white-space:nowrap;">Кабинет</div></div>
<div class="a" style="left:277px;top:491px;width:50px;height:20px;overflow:hidden"><div class="t" style="position:absolute;right:3px;top:1.50px;font-size:13px;line-height:17px;font-weight:700;color:#000;letter-spacing:0.5px;white-space:nowrap;margin-right:-0.5px;">8</div></div>
<div class="a" style="left:328px;top:491px;width:80px;height:20px;overflow:hidden"><div class="t" style="position:absolute;right:3px;top:1.50px;font-size:13px;line-height:17px;font-weight:700;color:#000;letter-spacing:0.5px;white-space:nowrap;margin-right:-0.5px;">579.20</div></div>
<div class="a" style="left:409px;top:491px;width:35px;height:20px;overflow:hidden"><div class="t" style="position:absolute;right:3px;top:1.50px;font-size:13px;line-height:17px;font-weight:700;color:#000;letter-spacing:0.5px;white-space:nowrap;margin-right:-0.5px;">1</div></div>
<div class="a" style="left:17px;top:512px;width:35px;height:20px;overflow:hidden"><div class="t" style="position:absolute;right:3px;top:1.50px;font-size:13px;line-height:17px;font-weight:700;color:#000;letter-spacing:0.5px;white-space:nowrap;margin-right:-0.5px;">9</div></div>
<div class="a" style="left:56px;top:512px;width:13px;height:20px;overflow:hidden"><div class="t" style="position:absolute;left:2px;top:1.50px;font-size:13px;line-height:17px;font-weight:700;color:#000;letter-spacing:0.5px;white-space:nowrap;">1</div></div>
<div class="a" style="left:70px;top:512px;width:206px;height:20px;overflow:hidden"><div class="t" style="position:absolute;left:2px;top:1.50px;font-size:13px;line-height:17px;font-weight:700;color:#000;letter-spacing:0.5px;white-space:nowrap;">Коэфф.квалиф.</div></div>
<div class="a" style="left:277px;top:512px;width:50px;height:20px;overflow:hidden"><div class="t" style="position:absolute;right:3px;top:1.50px;font-size:13px;line-height:17px;font-weight:700;color:#000;letter-spacing:0.5px;white-space:nowrap;margin-right:-0.5px;">15</div></div>
<div class="a" style="left:328px;top:512px;width:80px;height:20px;overflow:hidden"><div class="t" style="position:absolute;right:3px;top:1.50px;font-size:13px;line-height:17px;font-weight:700;color:#000;letter-spacing:0.5px;white-space:nowrap;margin-right:-0.5px;">1448.00</div></div>
<div class="a" style="left:409px;top:512px;width:35px;height:20px;overflow:hidden"><div class="t" style="position:absolute;right:3px;top:1.50px;font-size:13px;line-height:17px;font-weight:700;color:#000;letter-spacing:0.5px;white-space:nowrap;margin-right:-0.5px;">9</div></div>
<div class="a" style="left:17px;top:533px;width:35px;height:20px;overflow:hidden"><div class="t" style="position:absolute;right:3px;top:1.50px;font-size:13px;line-height:17px;font-weight:700;color:#000;letter-spacing:0.5px;white-space:nowrap;margin-right:-0.5px;">22</div></div>
<div class="a" style="left:56px;top:533px;width:13px;height:20px;overflow:hidden"><div class="t" style="position:absolute;left:2px;top:1.50px;font-size:13px;line-height:17px;font-weight:700;color:#000;letter-spacing:0.5px;white-space:nowrap;">1</div></div>
<div class="a" style="left:70px;top:533px;width:206px;height:20px;overflow:hidden"><div class="t" style="position:absolute;left:2px;top:1.50px;font-size:13px;line-height:17px;font-weight:700;color:#000;letter-spacing:0.5px;white-space:nowrap;">Раб. в с.м.</div></div>
<div class="a" style="left:277px;top:533px;width:50px;height:20px;overflow:hidden"><div class="t" style="position:absolute;right:3px;top:1.50px;font-size:13px;line-height:17px;font-weight:700;color:#000;letter-spacing:0.5px;white-space:nowrap;margin-right:-0.5px;">5</div></div>
<div class="a" style="left:328px;top:533px;width:80px;height:20px;overflow:hidden"><div class="t" style="position:absolute;right:3px;top:1.50px;font-size:13px;line-height:17px;font-weight:700;color:#000;letter-spacing:0.5px;white-space:nowrap;margin-right:-0.5px;">482.67</div></div>
<div class="a" style="left:409px;top:533px;width:35px;height:20px;overflow:hidden"><div class="t" style="position:absolute;right:3px;top:1.50px;font-size:13px;line-height:17px;font-weight:700;color:#000;letter-spacing:0.5px;white-space:nowrap;margin-right:-0.5px;">22</div></div>
<div class="a" style="left:17px;top:554px;width:35px;height:20px;overflow:hidden"><div class="t" style="position:absolute;right:3px;top:1.50px;font-size:13px;line-height:17px;font-weight:700;color:#000;letter-spacing:0.5px;white-space:nowrap;margin-right:-0.5px;">37</div></div>
<div class="a" style="left:56px;top:554px;width:13px;height:20px;overflow:hidden"><div class="t" style="position:absolute;left:2px;top:1.50px;font-size:13px;line-height:17px;font-weight:700;color:#000;letter-spacing:0.5px;white-space:nowrap;">0</div></div>
<div class="a" style="left:70px;top:554px;width:206px;height:20px;overflow:hidden"><div class="t" style="position:absolute;left:2px;top:1.50px;font-size:13px;line-height:17px;font-weight:700;color:#000;letter-spacing:0.5px;white-space:nowrap;">Уральские</div></div>
<div class="a" style="left:277px;top:554px;width:50px;height:20px;overflow:hidden"><div class="t" style="position:absolute;right:3px;top:1.50px;font-size:13px;line-height:17px;font-weight:700;color:#000;letter-spacing:0.5px;white-space:nowrap;margin-right:-0.5px;">15</div></div>
<div class="a" style="left:328px;top:554px;width:80px;height:20px;overflow:hidden"><div class="t" style="position:absolute;right:3px;top:1.50px;font-size:13px;line-height:17px;font-weight:700;color:#000;letter-spacing:0.5px;white-space:nowrap;margin-right:-0.5px;">2226.63</div></div>
<div class="a" style="left:409px;top:554px;width:35px;height:20px;overflow:hidden"><div class="t" style="position:absolute;right:3px;top:1.50px;font-size:13px;line-height:17px;font-weight:700;color:#000;letter-spacing:0.5px;white-space:nowrap;margin-right:-0.5px;">37</div></div>
<div class="a" style="left:17px;top:575px;width:35px;height:20px;overflow:hidden"><div class="t" style="position:absolute;right:3px;top:1.50px;font-size:13px;line-height:17px;font-weight:700;color:#808080;letter-spacing:0.5px;white-space:nowrap;margin-right:-0.5px;">37</div></div>
<div class="a" style="left:56px;top:575px;width:13px;height:20px;overflow:hidden"><div class="t" style="position:absolute;left:2px;top:1.50px;font-size:13px;line-height:17px;font-weight:700;color:#808080;letter-spacing:0.5px;white-space:nowrap;">1</div></div>
<div class="a" style="left:70px;top:575px;width:206px;height:20px;overflow:hidden"><div class="t" style="position:absolute;left:2px;top:1.50px;font-size:13px;line-height:17px;font-weight:700;color:#808080;letter-spacing:0.5px;white-space:nowrap;">Уральские</div></div>
<div class="a" style="left:277px;top:575px;width:50px;height:20px;overflow:hidden"><div class="t" style="position:absolute;right:3px;top:1.50px;font-size:13px;line-height:17px;font-weight:700;color:#808080;letter-spacing:0.5px;white-space:nowrap;margin-right:-0.5px;">15</div></div>
<div class="a" style="left:328px;top:575px;width:80px;height:20px;overflow:hidden"><div class="t" style="position:absolute;right:3px;top:1.50px;font-size:13px;line-height:17px;font-weight:700;color:#808080;letter-spacing:0.5px;white-space:nowrap;margin-right:-0.5px;">2226.63</div></div>
<div class="a" style="left:409px;top:575px;width:35px;height:20px;overflow:hidden"><div class="t" style="position:absolute;right:3px;top:1.50px;font-size:13px;line-height:17px;font-weight:700;color:#808080;letter-spacing:0.5px;white-space:nowrap;margin-right:-0.5px;">37</div></div>
<div class="a" style="left:17px;top:596px;width:35px;height:20px;overflow:hidden"><div class="t" style="position:absolute;right:3px;top:1.50px;font-size:13px;line-height:17px;font-weight:700;color:#000;letter-spacing:0.5px;white-space:nowrap;margin-right:-0.5px;">40</div></div>
<div class="a" style="left:56px;top:596px;width:13px;height:20px;overflow:hidden"><div class="t" style="position:absolute;left:2px;top:1.50px;font-size:13px;line-height:17px;font-weight:700;color:#000;letter-spacing:0.5px;white-space:nowrap;">1</div></div>
<div class="a" style="left:70px;top:596px;width:206px;height:20px;overflow:hidden"><div class="t" style="position:absolute;left:2px;top:1.50px;font-size:13px;line-height:17px;font-weight:700;color:#000;letter-spacing:0.5px;white-space:nowrap;">ВознКлРук</div></div>
<div class="a" style="left:277px;top:596px;width:50px;height:20px;overflow:hidden"><div class="t" style="position:absolute;right:3px;top:1.50px;font-size:13px;line-height:17px;font-weight:700;color:#000;letter-spacing:0.5px;white-space:nowrap;margin-right:-0.5px;">20</div></div>
<div class="a" style="left:328px;top:596px;width:80px;height:20px;overflow:hidden"><div class="t" style="position:absolute;right:3px;top:1.50px;font-size:13px;line-height:17px;font-weight:700;color:#008000;letter-spacing:0.5px;white-space:nowrap;margin-right:-0.5px;">690.00</div></div>
<div class="a" style="left:409px;top:596px;width:35px;height:20px;overflow:hidden"><div class="t" style="position:absolute;right:3px;top:1.50px;font-size:13px;line-height:17px;font-weight:700;color:#000;letter-spacing:0.5px;white-space:nowrap;margin-right:-0.5px;">40</div></div>
<div class="a" style="left:17px;top:617px;width:35px;height:20px;overflow:hidden"><div class="t" style="position:absolute;right:3px;top:1.50px;font-size:13px;line-height:17px;font-weight:700;color:#000;letter-spacing:0.5px;white-space:nowrap;margin-right:-0.5px;">43</div></div>
<div class="a" style="left:56px;top:617px;width:13px;height:20px;overflow:hidden"><div class="t" style="position:absolute;left:2px;top:1.50px;font-size:13px;line-height:17px;font-weight:700;color:#000;letter-spacing:0.5px;white-space:nowrap;">1</div></div>
<div class="a" style="left:70px;top:617px;width:206px;height:20px;overflow:hidden"><div class="t" style="position:absolute;left:2px;top:1.50px;font-size:13px;line-height:17px;font-weight:700;color:#000;letter-spacing:0.5px;white-space:nowrap;">ПровТетр15%</div></div>
<div class="a" style="left:277px;top:617px;width:50px;height:20px;overflow:hidden"><div class="t" style="position:absolute;right:3px;top:1.50px;font-size:13px;line-height:17px;font-weight:700;color:#000;letter-spacing:0.5px;white-space:nowrap;margin-right:-0.5px;">9</div></div>
<div class="a" style="left:328px;top:617px;width:80px;height:20px;overflow:hidden"><div class="t" style="position:absolute;right:3px;top:1.50px;font-size:13px;line-height:17px;font-weight:700;color:#000;letter-spacing:0.5px;white-space:nowrap;margin-right:-0.5px;">543.00</div></div>
<div class="a" style="left:409px;top:617px;width:35px;height:20px;overflow:hidden"><div class="t" style="position:absolute;right:3px;top:1.50px;font-size:13px;line-height:17px;font-weight:700;color:#000;letter-spacing:0.5px;white-space:nowrap;margin-right:-0.5px;">1</div></div>
<div class="a" style="left:8px;top:432px;width:6px;height:11px;background:#ececec;"></div>
<svg class="a" style="left:8px;top:432px" width="7" height="11" viewBox="0 0 7 11"><path d="M0 0L6 5.5L0 11Z" fill="#000"/></svg>
<div class="a" style="left:488px;top:410px;width:16px;height:232px;background:#f0f0f0;"></div>
<div class="a" style="left:488px;top:427px;width:15px;height:17px;background:#cdcdcd;"></div>
<svg class="a" style="left:491px;top:415px" width="9" height="9" viewBox="0 0 9 9"><path d="M1 6L4.5 2.5L8 6" stroke="#606060" stroke-width="2" fill="none"/></svg>
<svg class="a" style="left:491px;top:629px" width="9" height="9" viewBox="0 0 9 9"><path d="M1 3L4.5 6.5L8 3" stroke="#606060" stroke-width="2" fill="none"/></svg>
<div class="a" style="left:508px;top:408px;width:499px;height:234px;border:1px solid #a0a0a0;background:#fff;"></div>
<div class="a" style="left:521px;top:410px;width:1px;height:144px;background:#e3e3e3;"></div>
<div class="a" style="left:563px;top:410px;width:1px;height:144px;background:#e3e3e3;"></div>
<div class="a" style="left:567px;top:410px;width:1px;height:144px;background:#e3e3e3;"></div>
<div class="a" style="left:581px;top:410px;width:1px;height:144px;background:#e3e3e3;"></div>
<div class="a" style="left:814px;top:410px;width:1px;height:144px;background:#e3e3e3;"></div>
<div class="a" style="left:864px;top:410px;width:1px;height:144px;background:#e3e3e3;"></div>
<div class="a" style="left:949px;top:410px;width:1px;height:144px;background:#e3e3e3;"></div>
<div class="a" style="left:987px;top:410px;width:1px;height:144px;background:#e3e3e3;"></div>
<div class="a" style="left:510px;top:427px;width:478px;height:1px;background:#e3e3e3;"></div>
<div class="a" style="left:510px;top:448px;width:478px;height:1px;background:#e3e3e3;"></div>
<div class="a" style="left:510px;top:469px;width:478px;height:1px;background:#e3e3e3;"></div>
<div class="a" style="left:510px;top:490px;width:478px;height:1px;background:#e3e3e3;"></div>
<div class="a" style="left:510px;top:511px;width:478px;height:1px;background:#e3e3e3;"></div>
<div class="a" style="left:510px;top:532px;width:478px;height:1px;background:#e3e3e3;"></div>
<div class="a" style="left:510px;top:553px;width:478px;height:1px;background:#e3e3e3;"></div>
<div class="a" style="left:522px;top:409px;width:41px;height:20px;overflow:hidden"><div class="t" style="position:absolute;left:0;width:100%;text-align:center;top:2.12px;font-size:11.5px;line-height:17px;font-weight:700;color:#000;letter-spacing:0.3px;white-space:nowrap;">Код</div></div>
<div class="a" style="left:568px;top:409px;width:13px;height:20px;overflow:hidden"><div class="t" style="position:absolute;left:0;width:100%;text-align:center;top:2.12px;font-size:11.5px;line-height:17px;font-weight:700;color:#000;letter-spacing:0.3px;white-space:nowrap;">Бı</div></div>
<div class="a" style="left:582px;top:409px;width:232px;height:20px;overflow:hidden"><div class="t" style="position:absolute;left:0;width:100%;text-align:center;top:2.12px;font-size:11.5px;line-height:17px;font-weight:700;color:#000;letter-spacing:0.3px;white-space:nowrap;">Удержание</div></div>
<div class="a" style="left:815px;top:409px;width:49px;height:20px;overflow:hidden"><div class="t" style="position:absolute;left:0;width:100%;text-align:center;top:2.12px;font-size:11.5px;line-height:17px;font-weight:700;color:#000;letter-spacing:0.3px;white-space:nowrap;">Колич.</div></div>
<div class="a" style="left:865px;top:409px;width:84px;height:20px;overflow:hidden"><div class="t" style="position:absolute;left:0;width:100%;text-align:center;top:2.12px;font-size:11.5px;line-height:17px;font-weight:700;color:#000;letter-spacing:0.3px;white-space:nowrap;">Сумма</div></div>
<div class="a" style="left:950px;top:409px;width:37px;height:20px;overflow:hidden"><div class="t" style="position:absolute;left:0;width:100%;text-align:center;top:2.12px;font-size:11.5px;line-height:17px;font-weight:700;color:#000;letter-spacing:0.3px;white-space:nowrap;">Групп</div></div>
<div class="a" style="left:522px;top:428px;width:41px;height:20px;overflow:hidden"><div class="t" style="position:absolute;right:3px;top:1.50px;font-size:13px;line-height:17px;font-weight:700;color:#000;letter-spacing:0.5px;white-space:nowrap;margin-right:-0.5px;">101</div></div>
<div class="a" style="left:568px;top:428px;width:13px;height:20px;overflow:hidden"><div class="t" style="position:absolute;left:2px;top:1.50px;font-size:13px;line-height:17px;font-weight:700;color:#000;letter-spacing:0.5px;white-space:nowrap;">0</div></div>
<div class="a" style="left:582px;top:428px;width:232px;height:20px;overflow:hidden"><div class="t" style="position:absolute;left:2px;top:1.50px;font-size:13px;line-height:17px;font-weight:700;color:#000;letter-spacing:0.5px;white-space:nowrap;">НДФЛ</div></div>
<div class="a" style="left:815px;top:428px;width:49px;height:20px;overflow:hidden"><div class="t" style="position:absolute;right:3px;top:1.50px;font-size:13px;line-height:17px;font-weight:700;color:#000;letter-spacing:0.5px;white-space:nowrap;margin-right:-0.5px;">13</div></div>
<div class="a" style="left:865px;top:428px;width:84px;height:20px;overflow:hidden"><div class="t" style="position:absolute;right:3px;top:1.50px;font-size:13px;line-height:17px;font-weight:700;color:#000;letter-spacing:0.5px;white-space:nowrap;margin-right:-0.5px;">2219.00</div></div>
<div class="a" style="left:950px;top:428px;width:37px;height:20px;overflow:hidden"><div class="t" style="position:absolute;right:3px;top:1.50px;font-size:13px;line-height:17px;font-weight:700;color:#000;letter-spacing:0.5px;white-space:nowrap;margin-right:-0.5px;">101</div></div>
<div class="a" style="left:522px;top:449px;width:41px;height:20px;overflow:hidden"><div class="t" style="position:absolute;right:3px;top:1.50px;font-size:13px;line-height:17px;font-weight:700;color:#808080;letter-spacing:0.5px;white-space:nowrap;margin-right:-0.5px;">101</div></div>
<div class="a" style="left:568px;top:449px;width:13px;height:20px;overflow:hidden"><div class="t" style="position:absolute;left:2px;top:1.50px;font-size:13px;line-height:17px;font-weight:700;color:#808080;letter-spacing:0.5px;white-space:nowrap;">1</div></div>
<div class="a" style="left:582px;top:449px;width:232px;height:20px;overflow:hidden"><div class="t" style="position:absolute;left:2px;top:1.50px;font-size:13px;line-height:17px;font-weight:700;color:#808080;letter-spacing:0.5px;white-space:nowrap;">НДФЛ</div></div>
<div class="a" style="left:815px;top:449px;width:49px;height:20px;overflow:hidden"><div class="t" style="position:absolute;right:3px;top:1.50px;font-size:13px;line-height:17px;font-weight:700;color:#808080;letter-spacing:0.5px;white-space:nowrap;margin-right:-0.5px;">13</div></div>
<div class="a" style="left:865px;top:449px;width:84px;height:20px;overflow:hidden"><div class="t" style="position:absolute;right:3px;top:1.50px;font-size:13px;line-height:17px;font-weight:700;color:#808080;letter-spacing:0.5px;white-space:nowrap;margin-right:-0.5px;">2219.00</div></div>
<div class="a" style="left:950px;top:449px;width:37px;height:20px;overflow:hidden"><div class="t" style="position:absolute;right:3px;top:1.50px;font-size:13px;line-height:17px;font-weight:700;color:#808080;letter-spacing:0.5px;white-space:nowrap;margin-right:-0.5px;">101</div></div>
<div class="a" style="left:522px;top:470px;width:41px;height:20px;overflow:hidden"><div class="t" style="position:absolute;right:3px;top:1.50px;font-size:13px;line-height:17px;font-weight:700;color:#000;letter-spacing:0.5px;white-space:nowrap;margin-right:-0.5px;">108</div></div>
<div class="a" style="left:568px;top:470px;width:13px;height:20px;overflow:hidden"><div class="t" style="position:absolute;left:2px;top:1.50px;font-size:13px;line-height:17px;font-weight:700;color:#000;letter-spacing:0.5px;white-space:nowrap;">0</div></div>
<div class="a" style="left:582px;top:470px;width:232px;height:20px;overflow:hidden"><div class="t" style="position:absolute;left:2px;top:1.50px;font-size:13px;line-height:17px;font-weight:700;color:#000;letter-spacing:0.5px;white-space:nowrap;">Профсоюз</div></div>
<div class="a" style="left:815px;top:470px;width:49px;height:20px;overflow:hidden"><div class="t" style="position:absolute;right:3px;top:1.50px;font-size:13px;line-height:17px;font-weight:700;color:#000;letter-spacing:0.5px;white-space:nowrap;margin-right:-0.5px;">1</div></div>
<div class="a" style="left:865px;top:470px;width:84px;height:20px;overflow:hidden"><div class="t" style="position:absolute;right:3px;top:1.50px;font-size:13px;line-height:17px;font-weight:700;color:#000;letter-spacing:0.5px;white-space:nowrap;margin-right:-0.5px;">170.71</div></div>
<div class="a" style="left:950px;top:470px;width:37px;height:20px;overflow:hidden"><div class="t" style="position:absolute;right:3px;top:1.50px;font-size:13px;line-height:17px;font-weight:700;color:#000;letter-spacing:0.5px;white-space:nowrap;margin-right:-0.5px;">108</div></div>
<div class="a" style="left:522px;top:491px;width:41px;height:20px;overflow:hidden"><div class="t" style="position:absolute;right:3px;top:1.50px;font-size:13px;line-height:17px;font-weight:700;color:#808080;letter-spacing:0.5px;white-space:nowrap;margin-right:-0.5px;">108</div></div>
<div class="a" style="left:568px;top:491px;width:13px;height:20px;overflow:hidden"><div class="t" style="position:absolute;left:2px;top:1.50px;font-size:13px;line-height:17px;font-weight:700;color:#808080;letter-spacing:0.5px;white-space:nowrap;">1</div></div>
<div class="a" style="left:582px;top:491px;width:232px;height:20px;overflow:hidden"><div class="t" style="position:absolute;left:2px;top:1.50px;font-size:13px;line-height:17px;font-weight:700;color:#808080;letter-spacing:0.5px;white-space:nowrap;">Профсоюз</div></div>
<div class="a" style="left:815px;top:491px;width:49px;height:20px;overflow:hidden"><div class="t" style="position:absolute;right:3px;top:1.50px;font-size:13px;line-height:17px;font-weight:700;color:#808080;letter-spacing:0.5px;white-space:nowrap;margin-right:-0.5px;">1</div></div>
<div class="a" style="left:865px;top:491px;width:84px;height:20px;overflow:hidden"><div class="t" style="position:absolute;right:3px;top:1.50px;font-size:13px;line-height:17px;font-weight:700;color:#808080;letter-spacing:0.5px;white-space:nowrap;margin-right:-0.5px;">170.71</div></div>
<div class="a" style="left:950px;top:491px;width:37px;height:20px;overflow:hidden"><div class="t" style="position:absolute;right:3px;top:1.50px;font-size:13px;line-height:17px;font-weight:700;color:#808080;letter-spacing:0.5px;white-space:nowrap;margin-right:-0.5px;">108</div></div>
<div class="a" style="left:522px;top:512px;width:41px;height:20px;overflow:hidden"><div class="t" style="position:absolute;right:3px;top:1.50px;font-size:13px;line-height:17px;font-weight:700;color:#000;letter-spacing:0.5px;white-space:nowrap;margin-right:-0.5px;">122</div></div>
<div class="a" style="left:568px;top:512px;width:13px;height:20px;overflow:hidden"><div class="t" style="position:absolute;left:2px;top:1.50px;font-size:13px;line-height:17px;font-weight:700;color:#000;letter-spacing:0.5px;white-space:nowrap;">1</div></div>
<div class="a" style="left:582px;top:512px;width:232px;height:20px;overflow:hidden"><div class="t" style="position:absolute;left:2px;top:1.50px;font-size:13px;line-height:17px;font-weight:700;color:#000;letter-spacing:0.5px;white-space:nowrap;">На л/счет</div></div>
<div class="a" style="left:815px;top:512px;width:49px;height:20px;overflow:hidden"><div class="t" style="position:absolute;right:3px;top:1.50px;font-size:13px;line-height:17px;font-weight:700;color:#000;letter-spacing:0.5px;white-space:nowrap;margin-right:-0.5px;">0</div></div>
<div class="a" style="left:865px;top:512px;width:84px;height:20px;overflow:hidden"><div class="t" style="position:absolute;right:3px;top:1.50px;font-size:13px;line-height:17px;font-weight:700;color:#000;letter-spacing:0.5px;white-space:nowrap;margin-right:-0.5px;">11781.12</div></div>
<div class="a" style="left:950px;top:512px;width:37px;height:20px;overflow:hidden"><div class="t" style="position:absolute;right:3px;top:1.50px;font-size:13px;line-height:17px;font-weight:700;color:#000;letter-spacing:0.5px;white-space:nowrap;margin-right:-0.5px;">122</div></div>
<div class="a" style="left:522px;top:533px;width:41px;height:20px;overflow:hidden"><div class="t" style="position:absolute;right:3px;top:1.50px;font-size:13px;line-height:17px;font-weight:700;color:#000;letter-spacing:0.5px;white-space:nowrap;margin-right:-0.5px;">130</div></div>
<div class="a" style="left:568px;top:533px;width:13px;height:20px;overflow:hidden"><div class="t" style="position:absolute;left:2px;top:1.50px;font-size:13px;line-height:17px;font-weight:700;color:#000;letter-spacing:0.5px;white-space:nowrap;">1</div></div>
<div class="a" style="left:582px;top:533px;width:232px;height:20px;overflow:hidden"><div class="t" style="position:absolute;left:2px;top:1.50px;font-size:13px;line-height:17px;font-weight:700;color:#000;letter-spacing:0.5px;white-space:nowrap;">Аванс</div></div>
<div class="a" style="left:815px;top:533px;width:49px;height:20px;overflow:hidden"><div class="t" style="position:absolute;right:3px;top:1.50px;font-size:13px;line-height:17px;font-weight:700;color:#000;letter-spacing:0.5px;white-space:nowrap;margin-right:-0.5px;">0.4</div></div>
<div class="a" style="left:865px;top:533px;width:84px;height:20px;overflow:hidden"><div class="t" style="position:absolute;right:3px;top:1.50px;font-size:13px;line-height:17px;font-weight:700;color:#000;letter-spacing:0.5px;white-space:nowrap;margin-right:-0.5px;">2900.00</div></div>
<div class="a" style="left:950px;top:533px;width:37px;height:20px;overflow:hidden"><div class="t" style="position:absolute;right:3px;top:1.50px;font-size:13px;line-height:17px;font-weight:700;color:#000;letter-spacing:0.5px;white-space:nowrap;margin-right:-0.5px;">130</div></div>
<div class="a" style="left:513px;top:432px;width:6px;height:11px;background:#ececec;"></div>
<svg class="a" style="left:513px;top:432px" width="7" height="11" viewBox="0 0 7 11"><path d="M0 0L6 5.5L0 11Z" fill="#000"/></svg>
<div class="a" style="left:991px;top:410px;width:16px;height:232px;background:#f0f0f0;"></div>
<div class="a" style="left:991px;top:427px;width:15px;height:17px;background:#cdcdcd;"></div>
<svg class="a" style="left:994px;top:415px" width="9" height="9" viewBox="0 0 9 9"><path d="M1 6L4.5 2.5L8 6" stroke="#606060" stroke-width="2" fill="none"/></svg>
<svg class="a" style="left:994px;top:629px" width="9" height="9" viewBox="0 0 9 9"><path d="M1 3L4.5 6.5L8 3" stroke="#606060" stroke-width="2" fill="none"/></svg>
<div class="a" style="left:505px;top:406px;width:2px;height:268px;background:#a0a0a0;"></div>
<div class="a" style="left:507px;top:408px;width:1px;height:265px;background:#fff;"></div>
<div class="a t" style="top:650.89px;font-size:11px;line-height:14px;font-weight:400;color:#000;left:317px;">Всего начислено</div>
<div class="a t" style="top:650.10px;font-size:13px;line-height:17px;font-weight:700;color:#000080;letter-spacing:0.6px;left:83px;width:400.6px;text-align:right;">17070.83</div>
<div class="a t" style="top:651.19px;font-size:11px;line-height:14px;font-weight:400;color:#000;left:818px;">Всего удержано</div>
<div class="a t" style="top:650.00px;font-size:13px;line-height:17px;font-weight:700;color:#000080;letter-spacing:0.6px;left:584px;width:400.6px;text-align:right;">17070.83</div>
<div class="a" style="left:2px;top:673px;width:1008px;height:3px;background:#a0a0a0;"></div>
<div class="a" style="left:2px;top:676px;width:1007px;height:29px;border-style:solid;border-width:1px;border-color:#fff #a0a0a0 #a0a0a0 #fff;"></div>
<div class="a" style="left:1009px;top:677px;width:1px;height:29px;background:#fafafa;"></div>
<div class="a" style="left:3px;top:705px;width:1006px;height:1px;background:#fafafa;"></div>
<div class="a" style="left:1009px;top:51px;width:1px;height:625px;background:#a0a0a0;"></div>
<div class="a" style="left:1010px;top:51px;width:1px;height:625px;background:#aaa49f;"></div>
<div class="a" style="left:1px;top:51px;width:1px;height:656px;background:#fff;"></div>
<div class="a t" style="top:681.89px;font-size:11px;line-height:14px;font-weight:400;color:#000;letter-spacing:-0.2px;left:775px;">Сальдо на конец месяца</div>
<div class="a t" style="top:681.20px;font-size:13px;line-height:17px;font-weight:700;color:#000080;letter-spacing:0.6px;left:567px;width:400.6px;text-align:right;">0.00</div>
</body></html>
